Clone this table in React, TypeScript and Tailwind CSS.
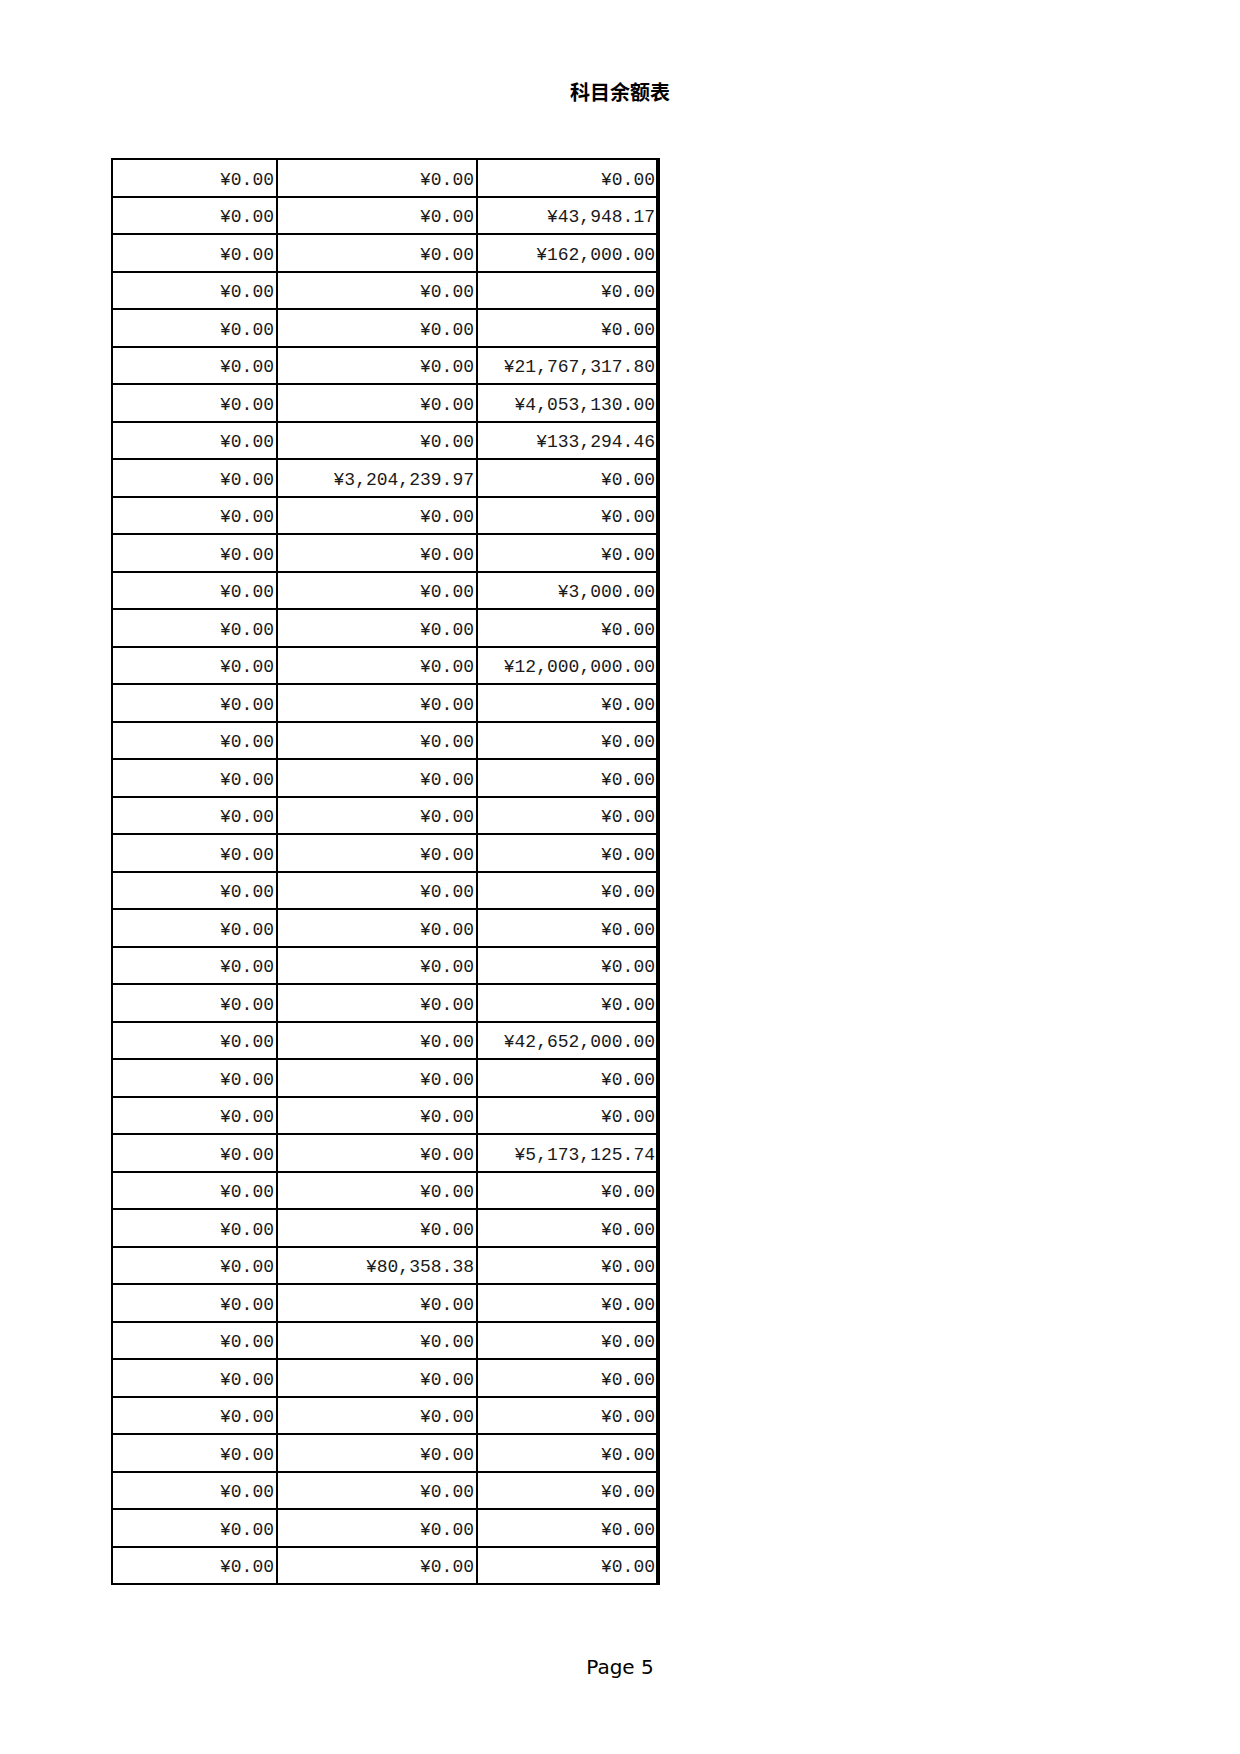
import React from "react";

const col3: Record<number, string> = {
  2: "¥43,948.17",
  3: "¥162,000.00",
  6: "¥21,767,317.80",
  7: "¥4,053,130.00",
  8: "¥133,294.46",
  12: "¥3,000.00",
  14: "¥12,000,000.00",
  24: "¥42,652,000.00",
  27: "¥5,173,125.74",
};
const col2: Record<number, string> = {
  9: "¥3,204,239.97",
  30: "¥80,358.38",
};

const rows = Array.from({ length: 38 }, (_, i) => {
  const n = i + 1;
  return {
    a: "¥0.00",
    b: col2[n] ?? "¥0.00",
    c: col3[n] ?? "¥0.00",
  };
});

export default function App() {
  return (
    <div className="w-[1240px] h-[1754px] bg-white relative text-black">
      <div className="pt-[77px] text-center text-[20px] font-bold leading-[29px] [font-family:'Noto_Sans_CJK_SC',sans-serif]">
        科目余额表
      </div>
      <div className="mt-[52px] ml-[111px] w-[549px] border-l-2 border-t-2 border-r-4 border-black [font-family:'Liberation_Mono',monospace] text-[18px] text-[#1a1a1a]">
        {rows.map((r, i) => (
          <div key={i} className="flex h-[37.5px] box-border border-b-2 border-black">
            <div className="w-[165px] border-r-2 border-black flex items-center justify-end pr-[2px] pt-[4px] leading-none">
              {r.a}
            </div>
            <div className="w-[200px] border-r-2 border-black flex items-center justify-end pr-[2px] pt-[4px] leading-none">
              {r.b}
            </div>
            <div className="w-[178px] flex items-center justify-end pr-[1px] pt-[4px] leading-none">
              {r.c}
            </div>
          </div>
        ))}
      </div>
      <div className="mt-[70px] text-center text-[20px] leading-[24px] [font-family:'DejaVu_Sans',sans-serif]">
        Page 5
      </div>
    </div>
  );
}
